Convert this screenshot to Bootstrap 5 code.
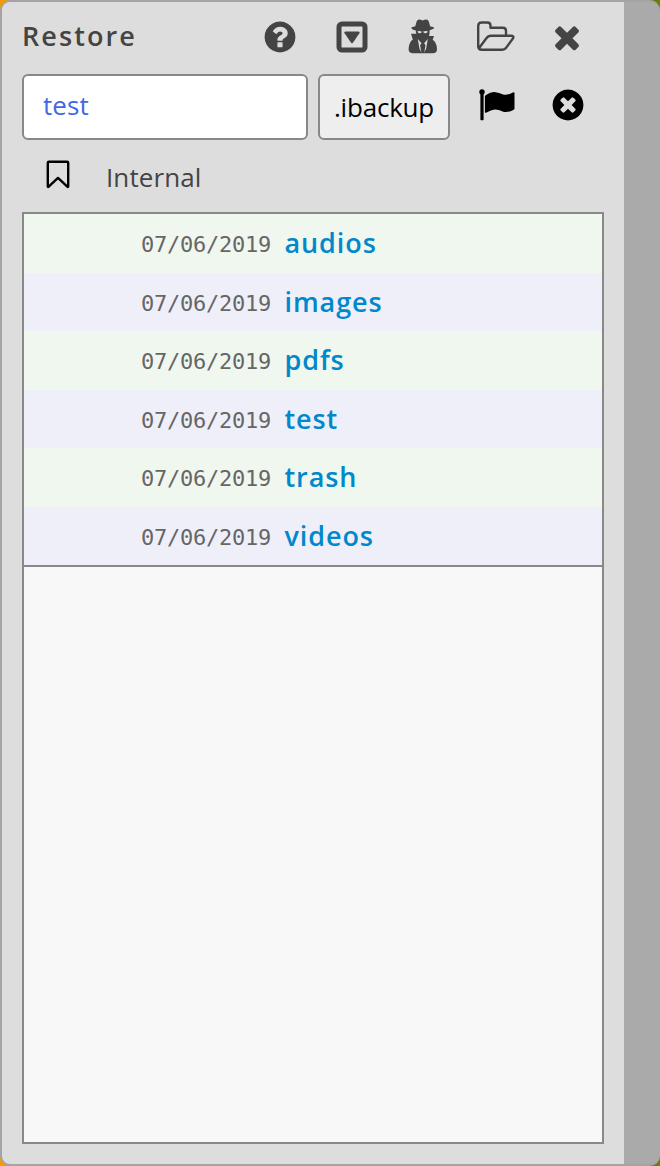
<!DOCTYPE html>
<html lang="en">
<head>
<meta charset="utf-8">
<title>Restore</title>
<link href="https://cdn.jsdelivr.net/npm/bootstrap@5.3.0/dist/css/bootstrap.min.css" rel="stylesheet">
<style>
html,body{height:100%}
body{background:linear-gradient(90deg,#f59a00 0 50%,#6f7a10 50%);font-family:"Open Sans",sans-serif;overflow:hidden;color:#444}
.shell{height:1166px;background:#aaa;border:2px solid #a4a4a4;border-right:0;border-radius:10px}
.panel{width:622px;background:#ddd;border-radius:8px 0 0 8px;padding:0 20px 20px}
.head{height:70px}
.title{width:239.5px;font-size:27px;font-weight:600;letter-spacing:2.1px;line-height:36px;padding-top:16px}
.tools{padding-top:17px}
.tools svg,.entry svg{display:block;flex:none}
.entry{height:68px;padding-top:2px;color:#000}
.field,.ext{height:66px;border:2px solid #888;border-radius:6px;font-size:26px;line-height:59px;white-space:nowrap}
.field{width:286px;background:#fff;color:#4169e1;padding:0 19px;letter-spacing:.1px}
.ext{width:132px;background:#eee;color:#000;margin-left:10px;letter-spacing:-.2px;text-align:center;padding:0}
.place{height:72px;padding-left:24px}
.place span{margin-left:36px;font-size:26px;letter-spacing:.1px;line-height:36px;padding-top:19px}
.files{border:2px solid #888;background:#f8f8f8}
.rows{border-bottom:2px solid #888;list-style:none}
.rows li{height:58.5px;padding-left:117px;line-height:57px;white-space:nowrap}
.rows li:nth-child(odd){background:#f0f7ef}
.rows li:nth-child(even){background:#efeff9}
.date{width:143.5px;font:22px/62px "DejaVu Sans Mono",monospace;letter-spacing:-.24px;color:#666}
.fname{font-size:27px;font-weight:600;letter-spacing:.9px;color:#08c}
</style>
</head>
<body>
<main class="shell">
 <section class="panel h-100 d-flex flex-column">
  <header class="head d-flex align-items-start">
   <div class="title">Restore</div>
   <div class="tools d-flex">
    <svg width="36" height="36" viewBox="0 0 1792 1792" fill="#444"><path d="M1024 1376v-192q0-14-9-23t-23-9h-192q-14 0-23 9t-9 23v192q0 14 9 23t23 9h192q14 0 23-9t9-23zm256-672q0-88-55.5-163t-138.5-116-170-41q-243 0-371 213-15 24 8 42l132 100q7 6 19 6 16 0 25-12 53-68 86-92 34-24 86-24 48 0 85.5 26t37.5 59q0 38-20 61t-68 45q-63 28-115.5 86.5t-52.5 125.5v36q0 14 9 23t23 9h192q14 0 23-9t9-23q0-19 21.5-49.5t54.5-49.5q32-18 49-28.5t46-35 44.5-48 28-60.5 12.5-81zm384 192q0 209-103 385.5t-279.5 279.5-385.5 103-385.5-103-279.5-279.5-103-385.5 103-385.5 279.5-279.5 385.5-103 385.5 103 279.5 279.5 103 385.5z"/></svg>
    <svg width="36" height="36" viewBox="0 0 36 36" style="margin-left:36px"><rect x="5" y="5" width="26" height="26" rx="3" fill="none" stroke="#444" stroke-width="5"/><path d="M11.500 12.500h13q1.900 0 .9 1.700l-6.300 9.400q-1.100 1.400-2.200 0l-6.300-9.400Q9.600 12.500 11.500 12.500z" fill="#444"/></svg>
    <svg width="36" height="36" viewBox="0 0 36 36" fill="#444" style="margin-left:35px"><path d="M11.300 3.600Q12 .4 14.200.4q1.600 0 3.500 1 1.900-1 3.500-1 2.200 0 2.900 3.200l1 3.600q4 .8 4 1.700 0 .8-2.500 1.600L24.500 11.600q.5 3-.5 5.400h5l-1.300 3.800q3.900 2.300 4.300 9.200 0 4.300-4.300 4.300H8Q3.600 34.300 3.600 30 4 23 7.800 20.500L6 14.700h5.400Q10.700 13.200 10.800 11.500 6.300 10.100 6.300 8.900q0-.9 4-1.700z"/><g fill="#ddd"><path d="M12.500 12.300q2-.5 3.600.1l1.300.6 1.400-.6q1.600-.6 3.900-.1-.3 2-2.100 2-1.700 0-2.400-1.200h-1.400q-.7 1.200-2.300 1.200-1.800 0-2-2z"/><path d="M12.800 20l3.700 4.300-1.400 2 1.300 7.200-2-4zM22.800 20l-3.700 4.300 1.400 2-1.300 7.200 2-4z"/></g></svg>
    <svg width="42" height="36" viewBox="0 0 42 36" fill="none" stroke="#444" stroke-width="2.400" stroke-linejoin="round" style="margin-left:33px"><path d="M4.200 28V7q0-3.500 3.500-3.500h5.600q3.200 0 3.200 3.200V8.800h12.300q3.200 0 3.200 3.200v4.500M4.800 29.500l7.200-9.800q2.100-2.900 5-2.900h19.800q4 0 1.900 3l-6.100 8.300q-1.900 2.700-5 2.700H7.700q-3.500 0-3.500-3.500"/></svg>
    <svg width="36" height="36" viewBox="0 0 1792 1792" fill="#444" style="margin-left:33.5px"><path d="M1490 1322q0 40-28 68l-136 136q-28 28-68 28t-68-28l-294-294-294 294q-28 28-68 28t-68-28l-136-136q-28-28-28-68t28-68l294-294-294-294q-28-28-28-68t28-68l136-136q28-28 68-28t68 28l294 294 294-294q28-28 68-28t68 28l136 136q28 28 28 68t-28 68l-294 294 294 294q28 28 28 68z"/></svg>
   </div>
  </header>
  <div class="entry d-flex align-items-start">
   <div class="field">test</div>
   <button class="ext">.ibackup</button>
   <svg width="40" height="36" viewBox="0 0 40 36" style="margin:13px 0 0 27px"><circle cx="5" cy="5" r="2.700"/><path d="M3.400 5h3.200v27.500q0 .7-.7.700H4.100q-.7 0-.7-.7zM8.300 8.500q6-3.900 10.300-3.300 3.200.4 7.500 2.300 3.100 1.200 8.700-1.600 2.700-1.400 2.700.2v15.300q0 .9-1.200 1.500-6.400 3.400-10.600 1.600-4-1.900-7.400-1.900-3.100 0-8.700 2.900-1.700.8-1.700-.6V10q0-.9.400-1.500z"/></svg>
   <svg width="36" height="36" viewBox="0 0 1792 1792" style="margin:13px 0 0 32.5px"><path d="M1277 1122q0-26-19-45l-181-181 181-181q19-19 19-45 0-27-19-46l-90-90q-19-19-46-19-26 0-45 19l-181 181-181-181q-19-19-45-19-27 0-46 19l-90 90q-19 19-19 46 0 26 19 45l181 181-181 181q-19 19-19 45 0 27 19 46l90 90q19 19 46 19 26 0 45-19l181-181 181 181q19 19 45 19 27 0 46-19l90-90q19-19 19-46zm387-226q0 209-103 385.500t-279.500 279.500-385.500 103-385.500-103-279.500-279.500-103-385.500 103-385.500 279.500-279.500 385.500-103 385.500 103 279.500 279.500 103 385.500z"/></svg>
  </div>
  <div class="place d-flex align-items-start">
   <svg width="24" height="29" viewBox="0 0 24 29" fill="none" stroke="#000" stroke-width="2.400" stroke-linejoin="round" style="margin-top:20px"><path d="M2.800 1.700h18.400q1 0 1 1V26.300q0 1.200-.9.300L12 17.900 2.700 26.600q-.9.900-.9-.3V2.700q0-1 1-1z"/></svg>
   <span>Internal</span>
  </div>
  <div class="files flex-grow-1">
   <ul class="rows m-0 p-0">
    <li class="d-flex"><span class="date">07/06/2019</span><span class="fname">audios</span></li>
    <li class="d-flex"><span class="date">07/06/2019</span><span class="fname">images</span></li>
    <li class="d-flex"><span class="date">07/06/2019</span><span class="fname">pdfs</span></li>
    <li class="d-flex"><span class="date">07/06/2019</span><span class="fname">test</span></li>
    <li class="d-flex"><span class="date">07/06/2019</span><span class="fname">trash</span></li>
    <li class="d-flex"><span class="date">07/06/2019</span><span class="fname">videos</span></li>
   </ul>
  </div>
 </section>
</main>
<script src="https://cdn.jsdelivr.net/npm/bootstrap@5.3.0/dist/js/bootstrap.bundle.min.js"></script>
</body>
</html>
